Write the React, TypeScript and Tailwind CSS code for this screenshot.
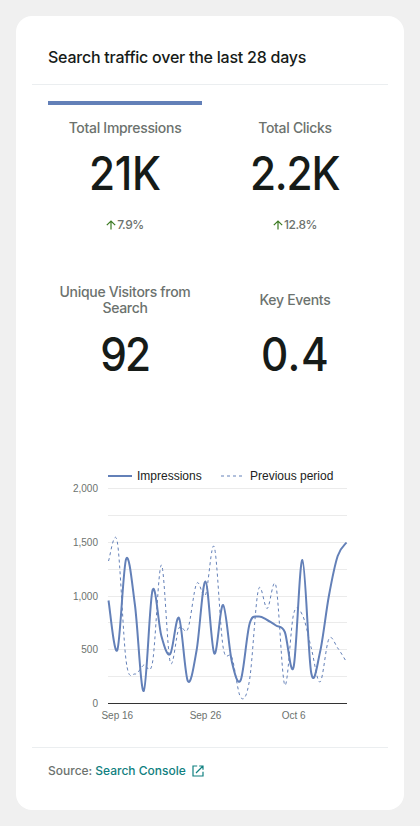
import React from "react";

const current = [600.5, 650, 559, 605, 691, 590, 636, 654, 618, 681, 650, 581.5, 653.5, 605, 662, 680, 624, 616.5, 620, 625.5, 632, 667, 560, 673, 652, 596, 556, 542.5];
const previous = [561, 542, 661, 674, 665, 662, 565, 662, 628, 629, 583.5, 595, 547, 647, 657.5, 697.5, 680, 590, 608.5, 586, 685, 614, 615, 648, 682, 639, 648, 662];

function curve(values: number[]) {
  const pts = values.map((y, i) => [60.5 + (238 / 27) * i, y - 460]);
  let d = `M${pts[0][0]},${pts[0][1]}`;
  for (let i = 0; i < pts.length - 1; i++) {
    const a = pts[Math.max(0, i - 1)];
    const b = pts[i];
    const c = pts[i + 1];
    const e = pts[Math.min(pts.length - 1, i + 2)];
    d += `C${b[0] + (c[0] - a[0]) / 6},${b[1] + (c[1] - a[1]) / 6} ${c[0] - (e[0] - b[0]) / 6},${c[1] - (e[1] - b[1]) / 6} ${c[0]},${c[1]}`;
  }
  return d;
}

interface TileProps {
  label: string;
  value: string;
  valueClass: string;
  change?: string;
  active?: boolean;
}

function Tile({ label, value, valueClass, change, active }: TileProps) {
  return (
    <div className={`flex w-[154px] flex-col items-center border-t-4 ${active ? "border-[#6380b8]" : "border-transparent"}`}>
      <div className="mt-[6px] flex h-[34px] w-[140px] items-center justify-center text-center text-[14px] font-medium leading-4 tracking-[-0.3px] text-[#6c726e]">
        <span>{label}</span>
      </div>
      <div className={`h-[50px] scale-x-[0.92] text-[46px] font-[540] leading-[50px] text-[#161b18] ${valueClass}`}>{value}</div>
      <div className="mt-[18px] flex h-4 items-center text-[12px] font-medium leading-4 tracking-[-0.45px] text-[#6c726e]">
        {change && (
          <>
            <svg width="10" height="10" viewBox="0 0 10 10" className="mr-px" fill="none" stroke="#3c7a22" strokeWidth="1.2">
              <path d="M5 9.5V1.2M.8 5.2 5 1l4.2 4.2" />
            </svg>
            <span>{change}</span>
          </>
        )}
      </div>
    </div>
  );
}

const ticks = [
  { label: "2,000", y: 28.5 },
  { label: "1,500", y: 82.5 },
  { label: "1,000", y: 136.5 },
  { label: "500", y: 189.5 },
  { label: "0", y: 243.5 },
];

function Chart() {
  return (
    <svg width="324" height="270" viewBox="0 0 324 270" className="block" fontFamily='"Liberation Sans", Arial, sans-serif'>
      <path d="M60 28.5h239M60 55.5h239M60 82.5h239M60 109.5h239M60 136.5h239M60 162.5h239M60 189.5h239M60 216.5h239" stroke="#ebebeb" />
      <path d="M60 243.5h239" stroke="#333" />
      <path d={curve(current)} fill="none" stroke="#6380b8" strokeWidth="2" />
      <path d={curve(previous)} fill="none" stroke="#6380b8" strokeWidth="1" strokeDasharray="3 3" />
      <path d="M60 16h24" stroke="#6380b8" strokeWidth="2" />
      <path d="M173 16h22" stroke="#b1c0dc" strokeWidth="2" strokeDasharray="3 3" />
      <text x="89" y="20" fontSize="12" fill="#222">Impressions</text>
      <text x="202" y="20" fontSize="12" fill="#222">Previous period</text>
      <g fontSize="10" fill="#6c726e">
        {ticks.map((t) => (
          <text key={t.label} x="50" y={t.y + 3.5} textAnchor="end">{t.label}</text>
        ))}
        <text x="69.3" y="259" textAnchor="middle">Sep 16</text>
        <text x="157.5" y="259" textAnchor="middle">Sep 26</text>
        <text x="245.6" y="259" textAnchor="middle">Oct 6</text>
      </g>
    </svg>
  );
}

export default function App() {
  return (
    <main className="h-[826px] w-[420px] bg-[#f0f0f0] p-4 font-['Inter',sans-serif]">
      <section className="flex h-[794px] flex-col rounded-2xl bg-white px-4">
        <header className="flex h-[69px] items-center border-b border-[#ebeef0] px-4 pt-[14px]">
          <h2 className="whitespace-nowrap text-[16px] font-medium leading-6 tracking-[-0.24px] text-[#161b18]">Search traffic over the last 28 days</h2>
        </header>
        <div className="grid h-[359px] grid-cols-[154px_154px] content-start gap-x-4 px-4 pt-4">
          <div className="h-[172px]">
            <Tile label="Total Impressions" value="21K" valueClass="mt-[3px] mb-px tracking-[-0.4px]" change="7.9%" active />
          </div>
          <div className="h-[172px]">
            <Tile label="Total Clicks" value="2.2K" valueClass="mt-[3px] mb-px tracking-[-1.2px]" change="12.8%" />
          </div>
          <Tile label="Unique Visitors from Search" value="92" valueClass="mt-[12px] tracking-[-2px]" />
          <Tile label="Key Events" value="0.4" valueClass="mt-[12px] tracking-[0.5px]" />
        </div>
        <div className="h-[303px] px-4 pt-4">
          <Chart />
        </div>
        <footer className="flex h-[47px] items-center border-t border-[#ebeef0] px-4 text-[12px] font-medium leading-4 text-[#6c726e]">
          <span>Source:</span>
          <a className="ml-[3px] flex items-center text-[#108080]">
            Search Console
            <svg width="12" height="12" viewBox="0 0 12 12" className="ml-[6px]" fill="none" stroke="currentColor" strokeWidth="1.2">
              <path d="M5.2 1H1v10h10V6.8M7.2 1H11v3.8M11 1 4 8" />
            </svg>
          </a>
        </footer>
      </section>
    </main>
  );
}
